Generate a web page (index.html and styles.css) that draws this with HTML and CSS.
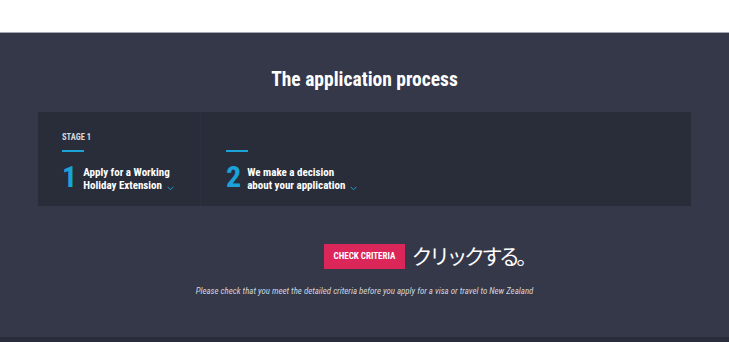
FILE: index.html
```html
<!DOCTYPE html>
<html lang="en">
<head>
    <meta charset="UTF-8">
    <meta name="viewport" content="width=device-width, initial-scale=1.0">
    <title>The application process</title>
    <link rel="stylesheet" href="styles.css">
</head>
<body>
    <div class="topbar"></div>
    <section class="process">
        <h2 class="process-title">The application process</h2>
        <div class="stages">
            <div class="stage stage-first">
                <div class="stage-label">STAGE 1</div>
                <div class="stage-bar"></div>
                <div class="stage-step">
                    <span class="stage-num">1</span>
                    <span class="stage-text">Apply for a Working<br>Holiday Extension<svg class="chevron" width="7" height="5" viewBox="0 0 7 5"><path d="M0.6 0.8 L3.5 3.8 L6.4 0.8" fill="none" stroke="#1b9fd6" stroke-width="1"/></svg></span>
                </div>
            </div>
            <div class="stage">
                <div class="stage-label"></div>
                <div class="stage-bar"></div>
                <div class="stage-step">
                    <span class="stage-num">2</span>
                    <span class="stage-text">We make a decision<br>about your application<svg class="chevron" width="7" height="5" viewBox="0 0 7 5"><path d="M0.6 0.8 L3.5 3.8 L6.4 0.8" fill="none" stroke="#1b9fd6" stroke-width="1"/></svg></span>
                </div>
            </div>
        </div>
        <div class="check">
            <a class="check-btn" href="#">CHECK CRITERIA</a>
            <span class="check-note">クリックする。</span>
        </div>
        <p class="check-caption">Please check that you meet the detailed criteria before you apply for a visa or travel to New Zealand</p>
    </section>
    <div class="footer"></div>
</body>
</html>
```
FILE: styles.css
```css
body {
    font-family: "Roboto Condensed", Roboto, sans-serif;
    background-color: #2a2e3c;
    margin: 0;
    padding: 0;
}
.topbar {
    height: 32px;
    background-color: #fff;
    border-bottom: 1px solid #a3a7b1;
}
.process {
    background-color: #343849;
    padding: 35px 0 40px;
    text-align: center;
}
.process-title {
    margin: 0 0 20px;
    font-size: 19.5px;
    line-height: 24px;
    font-weight: bold;
    color: #fff;
}
.stages {
    width: 653px;
    height: 94px;
    margin: 0 auto;
    display: grid;
    grid-template-columns: 163px 1fr;
    background-color: #282d39;
    text-align: left;
}
.stage {
    padding: 20px 0 0 25px;
}
.stage-first {
    padding-left: 24px;
    border-right: 1px solid #2c3140;
}
.stage-label {
    height: 10px;
    font-size: 8.5px;
    line-height: 10px;
    font-weight: bold;
    color: #d6d8de;
}
.stage-bar {
    width: 22px;
    height: 2px;
    margin-top: 8px;
    background-color: #1aa3d6;
}
.stage-step {
    display: flex;
    align-items: flex-start;
    margin-top: 10px;
}
.stage-num {
    font-size: 30px;
    line-height: 30px;
    font-weight: bold;
    color: #1ba2d9;
    margin-right: 6px;
}
.stage-text {
    margin-top: 4px;
    font-size: 11px;
    line-height: 13px;
    font-weight: bold;
    color: #fff;
}
.chevron {
    margin-left: 5px;
    vertical-align: -2px;
}
.check {
    position: relative;
    display: inline-block;
    margin-top: 38px;
}
.check-btn {
    display: block;
    height: 25px;
    padding: 0 10px;
    line-height: 25px;
    font-size: 9px;
    font-weight: bold;
    color: #fff;
    text-decoration: none;
    background-color: #da2659;
}
.check-note {
    position: absolute;
    left: 100%;
    top: -2px;
    margin-left: 6px;
    font-family: "Noto Sans CJK JP", sans-serif;
    font-size: 21px;
    line-height: 27px;
    letter-spacing: -3.5px;
    color: #fff;
    white-space: nowrap;
}
.check-caption {
    margin: 16px 0 0;
    font-size: 8.9px;
    line-height: 12px;
    font-style: italic;
    color: #d2d5db;
}
.footer {
    height: 20px;
}
```
